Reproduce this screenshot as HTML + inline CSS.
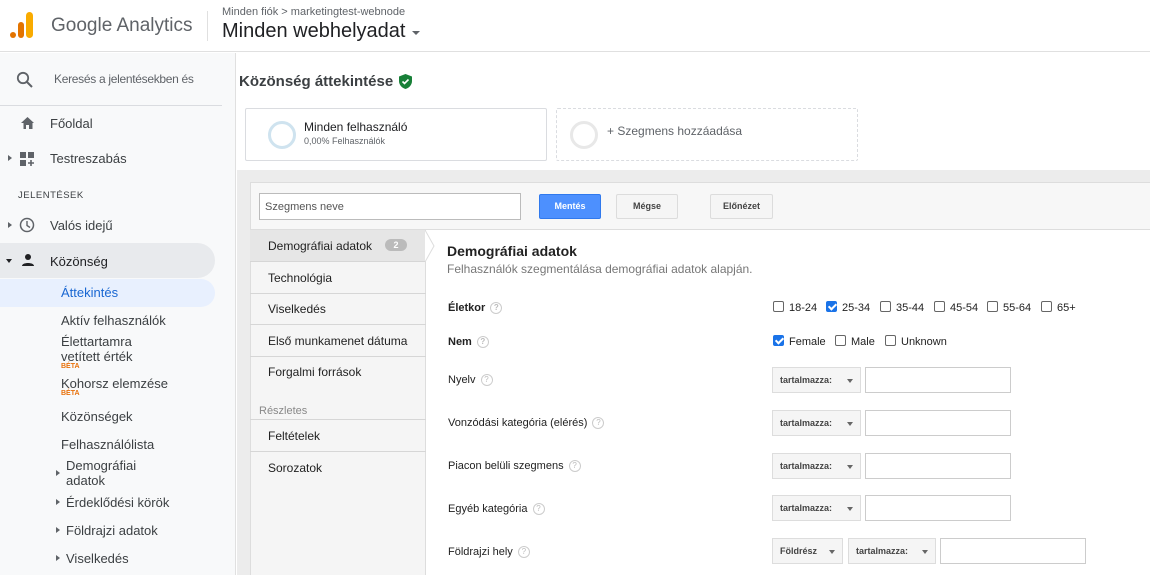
<!DOCTYPE html><html><head><meta charset="utf-8"><style>
*{box-sizing:border-box;margin:0;padding:0}
body{width:1150px;height:575px;overflow:hidden;font-family:"Liberation Sans",sans-serif;background:#fff;position:relative;color:#202124}
.a{position:absolute}
.hdr{left:0;top:0;width:1150px;height:52px;border-bottom:1px solid #e0e0e0;background:#fff}
.side{left:0;top:53px;width:236px;height:522px;background:#f8f9fa;border-right:1px solid #e0e0e0}
.t{position:absolute;white-space:nowrap}
.nav{font-size:13px;color:#3c4043}
.sub{font-size:13px;color:#3c4043;left:61px}
.beta{font-size:7px;color:#e8710a;font-weight:bold;left:61px}
.tri{position:absolute;width:0;height:0;border-top:3.5px solid transparent;border-bottom:3.5px solid transparent;border-left:4px solid #5f6368}
.li{position:absolute;left:250px;width:176px;height:32px;border-bottom:1px solid #d6d6d6;font-size:12px;color:#222;padding:9px 0 0 18px}
.q{display:inline-block;width:12px;height:12px;border:1px solid #ccc;border-radius:50%;font-size:8px;color:#bbb;text-align:center;line-height:10px;margin-left:5px;vertical-align:1px}
.lbl{position:absolute;left:448px;font-size:11px;color:#222}
.cb{display:inline-block;width:11px;height:11px;border:1px solid #666;border-radius:2px;vertical-align:-1px;margin-right:5px;background:#fff}
.cb.on{background:#1a73e8;border-color:#1a73e8;position:relative}
.cb.on:after{content:"";position:absolute;left:3px;top:0px;width:3px;height:6px;border:solid #fff;border-width:0 2px 2px 0;transform:rotate(45deg)}
.opt{position:absolute;font-size:11px;color:#222;white-space:nowrap}
.dd{position:absolute;height:26px;background:#f5f5f5;border:1px solid #ddd;font-size:9px;font-weight:bold;color:#444;padding:7px 0 0 7px}
.dd:after{content:"";position:absolute;right:7px;top:11px;border-left:3.5px solid transparent;border-right:3.5px solid transparent;border-top:4px solid #666}
.inp{position:absolute;height:26px;border:1px solid #ccc;background:#fff;width:146px}
.btn{position:absolute;top:194px;height:25px;font-size:9px;font-weight:bold;text-align:center;line-height:23px;border:1px solid #dcdcdc;background:#f5f5f5;color:#444;border-radius:2px}
</style></head><body>
<div class="a hdr"></div>
<svg class="a" style="left:10px;top:12px" width="24" height="27"><rect x="0" y="20" width="6" height="6" rx="3" fill="#e37400"/><rect x="8" y="10" width="6" height="16" rx="3" fill="#e37400"/><rect x="16" y="0" width="7" height="26" rx="3.5" fill="#f9ab00"/></svg>
<div class="t" style="left:51px;top:15px;font-size:19px;color:#5f6368">Google Analytics</div>
<div class="a" style="left:207px;top:11px;width:1px;height:30px;background:#e0e0e0"></div>
<div class="t" style="left:222px;top:6px;font-size:11px;color:#5f6368">Minden fiók &gt; marketingtest-webnode</div>
<div class="t" style="left:222px;top:20px;font-size:20px;color:#202124">Minden webhelyadat</div>
<div class="a" style="left:412px;top:31px;border-left:4.5px solid transparent;border-right:4.5px solid transparent;border-top:4.5px solid #5f6368"></div>

<div class="a side"></div>
<svg class="a" style="left:16px;top:71px" width="18" height="18"><circle cx="7" cy="7" r="5.2" fill="none" stroke="#5f6368" stroke-width="1.8"/><path d="M11 11l5 5" stroke="#5f6368" stroke-width="2"/></svg>
<div class="t" style="left:54px;top:72px;font-size:12px;color:#5f6368;letter-spacing:-.3px">Keresés a jelentésekben és</div>
<div class="a" style="left:0;top:105px;width:222px;height:1px;background:#dadce0"></div>
<svg class="a" style="left:20px;top:116px" width="15" height="14"><path d="M6 13V9h3v4h3.5V7H14L7.5 1 1 7h2.5v6z" fill="#5f6368"/></svg>
<div class="t nav" style="left:50px;top:116px">Főoldal</div>
<div class="tri" style="left:8px;top:155px"></div>
<svg class="a" style="left:20px;top:152px" width="14" height="14"><rect x="0" y="0" width="6" height="6" fill="#5f6368"/><rect x="8" y="0" width="6" height="6" fill="#5f6368"/><rect x="0" y="8" width="6" height="6" fill="#5f6368"/><path d="M11 8v6M8 11h6" stroke="#5f6368" stroke-width="1.6"/></svg>
<div class="t nav" style="left:50px;top:151px">Testreszabás</div>
<div class="t" style="left:18px;top:190px;font-size:9.5px;color:#3c4043;letter-spacing:.5px">JELENTÉSEK</div>
<div class="tri" style="left:8px;top:222px"></div>
<svg class="a" style="left:19px;top:217px" width="16" height="16"><circle cx="8" cy="8" r="6.5" fill="none" stroke="#5f6368" stroke-width="1.5"/><path d="M8 4v4.5l3 2" fill="none" stroke="#5f6368" stroke-width="1.4"/></svg>
<div class="t nav" style="left:50px;top:218px">Valós idejű</div>
<div class="a" style="left:0;top:243px;width:215px;height:35px;background:#e8eaed;border-radius:0 18px 18px 0"></div>
<div class="a" style="left:6px;top:259px;border-left:3.5px solid transparent;border-right:3.5px solid transparent;border-top:4px solid #202124"></div>
<svg class="a" style="left:21px;top:253px" width="14" height="14"><circle cx="7" cy="4" r="3" fill="#202124"/><path d="M1 13c0-4 12-4 12 0z" fill="#202124"/></svg>
<div class="t nav" style="left:50px;top:254px;color:#202124">Közönség</div>
<div class="a" style="left:0;top:279px;width:215px;height:28px;background:#e8f0fe;border-radius:0 14px 14px 0"></div>
<div class="t sub" style="top:285px;color:#1967d2">Áttekintés</div>
<div class="t sub" style="top:313px">Aktív felhasználók</div>
<div class="t sub" style="top:334px">Élettartamra</div>
<div class="t sub" style="top:349px">vetített érték</div>
<div class="t beta" style="top:363px">BÉTA</div>
<div class="t sub" style="top:376px">Kohorsz elemzése</div>
<div class="t beta" style="top:390px">BÉTA</div>
<div class="t sub" style="top:409px">Közönségek</div>
<div class="t sub" style="top:437px">Felhasználólista</div>
<div class="tri" style="left:56px;top:470px"></div>
<div class="t sub" style="left:66px;top:458px">Demográfiai</div>
<div class="t sub" style="left:66px;top:473px">adatok</div>
<div class="tri" style="left:56px;top:499px"></div>
<div class="t sub" style="left:66px;top:495px">Érdeklődési körök</div>
<div class="tri" style="left:56px;top:527px"></div>
<div class="t sub" style="left:66px;top:523px">Földrajzi adatok</div>
<div class="tri" style="left:56px;top:555px"></div>
<div class="t sub" style="left:66px;top:551px">Viselkedés</div>

<div class="t" style="left:239px;top:73px;font-size:15px;font-weight:bold;color:#3c4043">Közönség áttekintése</div>
<svg class="a" style="left:399px;top:74px" width="13" height="15"><path d="M6.5 0L0 2.5v4.5c0 4 3 7 6.5 8 3.5-1 6.5-4 6.5-8V2.5z" fill="#188038"/><path d="M3.5 7.5l2 2 4-4" fill="none" stroke="#fff" stroke-width="1.6"/></svg>
<div class="a" style="left:245px;top:108px;width:302px;height:53px;border:1px solid #dadce0;border-radius:2px"></div>
<div class="a" style="left:268px;top:121px;width:28px;height:28px;border:3px solid #cfe3ef;border-radius:50%"></div>
<div class="t" style="left:304px;top:120px;font-size:12px;color:#202124">Minden felhasználó</div>
<div class="t" style="left:304px;top:136px;font-size:9px;color:#5f6368">0,00% Felhasználók</div>
<div class="a" style="left:556px;top:108px;width:302px;height:53px;border:1px dashed #dadce0;border-radius:2px"></div>
<div class="a" style="left:570px;top:121px;width:28px;height:28px;border:3px solid #e8e8e8;border-radius:50%"></div>
<div class="t" style="left:607px;top:124px;font-size:12px;color:#5f6368">+ Szegmens hozzáadása</div>

<div class="a" style="left:237px;top:170px;width:913px;height:405px;background:#ececec"></div>
<div class="a" style="left:250px;top:182px;width:900px;height:393px;background:#fff;border:1px solid #ddd;border-right:none;border-bottom:none"></div>
<div class="a" style="left:251px;top:183px;width:899px;height:47px;background:#f7f7f7;border-bottom:1px solid #ddd"></div>
<div class="a" style="left:259px;top:193px;width:262px;height:27px;border:1px solid #bbb;background:#fff;font-size:11px;color:#555;padding:7px 5px">Szegmens neve</div>
<div class="btn" style="left:539px;width:62px;background:#4d90fe;border-color:#3079ed;color:#fff">Mentés</div>
<div class="btn" style="left:616px;width:62px">Mégse</div>
<div class="btn" style="left:710px;width:63px">Előnézet</div>
<div class="a" style="left:251px;top:231px;width:175px;height:344px;background:#f5f5f5;border-right:1px solid #ddd"></div>
<div class="li" style="top:230px;background:#e6e6e6">Demográfiai adatok<span style="position:absolute;left:135px;top:9px;width:22px;height:12px;border-radius:6px;background:#bbb;color:#fff;font-size:9px;font-weight:bold;text-align:center;line-height:12px">2</span></div>
<svg class="a" style="left:425px;top:230px" width="10" height="32"><path d="M0 0L9 16 0 32" fill="#fff" stroke="#ddd"/></svg>
<div class="li" style="top:262px">Technológia</div>
<div class="li" style="top:293px">Viselkedés</div>
<div class="li" style="top:325px">Első munkamenet dátuma</div>
<div class="li" style="top:356px;border-bottom:none">Forgalmi források</div>
<div class="t" style="left:259px;top:405px;font-size:11px;color:#888">Részletes</div>
<div class="li" style="top:419px;border-top:1px solid #d6d6d6;height:33px">Feltételek</div>
<div class="li" style="top:452px;border-bottom:none">Sorozatok</div>

<div class="t" style="left:447px;top:243px;font-size:14px;font-weight:bold;color:#222">Demográfiai adatok</div>
<div class="t" style="left:447px;top:262px;font-size:12px;color:#777">Felhasználók szegmentálása demográfiai adatok alapján.</div>
<div class="lbl" style="top:302px;font-weight:bold">Életkor<span class="q">?</span></div>
<div class="lbl" style="top:336px;font-weight:bold">Nem<span class="q">?</span></div>
<div class="lbl" style="top:374px">Nyelv<span class="q">?</span></div>
<div class="lbl" style="top:417px">Vonzódási kategória (elérés)<span class="q">?</span></div>
<div class="lbl" style="top:460px">Piacon belüli szegmens<span class="q">?</span></div>
<div class="lbl" style="top:503px">Egyéb kategória<span class="q">?</span></div>
<div class="lbl" style="top:546px">Földrajzi hely<span class="q">?</span></div>

<div class="opt" style="left:773px;top:301px"><span class="cb"></span>18-24</div>
<div class="opt" style="left:826px;top:301px"><span class="cb on"></span>25-34</div>
<div class="opt" style="left:880px;top:301px"><span class="cb"></span>35-44</div>
<div class="opt" style="left:934px;top:301px"><span class="cb"></span>45-54</div>
<div class="opt" style="left:987px;top:301px"><span class="cb"></span>55-64</div>
<div class="opt" style="left:1041px;top:301px"><span class="cb"></span>65+</div>
<div class="opt" style="left:773px;top:335px"><span class="cb on"></span>Female</div>
<div class="opt" style="left:835px;top:335px"><span class="cb"></span>Male</div>
<div class="opt" style="left:885px;top:335px"><span class="cb"></span>Unknown</div>

<div class="dd" style="left:772px;top:367px;width:89px">tartalmazza:</div><div class="inp" style="left:865px;top:367px"></div>
<div class="dd" style="left:772px;top:410px;width:89px">tartalmazza:</div><div class="inp" style="left:865px;top:410px"></div>
<div class="dd" style="left:772px;top:453px;width:89px">tartalmazza:</div><div class="inp" style="left:865px;top:453px"></div>
<div class="dd" style="left:772px;top:495px;width:89px">tartalmazza:</div><div class="inp" style="left:865px;top:495px"></div>
<div class="dd" style="left:772px;top:538px;width:71px">Földrész</div>
<div class="dd" style="left:848px;top:538px;width:88px">tartalmazza:</div><div class="inp" style="left:940px;top:538px"></div>
</body></html>
